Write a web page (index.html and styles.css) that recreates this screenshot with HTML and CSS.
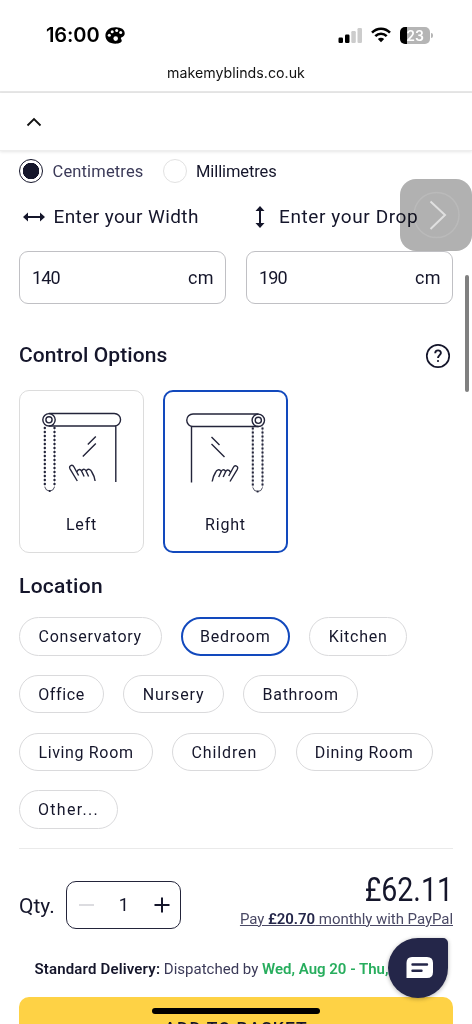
FILE: index.html
```html
<!DOCTYPE html>
<html lang="en">
<head>
<meta charset="utf-8">
<title>Make My Blinds</title>
<link rel="stylesheet" href="styles.css">
</head>
<body>
<div class="screen">
  <header class="browser">
    <div class="status">
      <div class="clock"><span>16:00</span>
        <svg width="20" height="17" viewBox="0 0 20 17"><path d="M11 .3C5 .1.4 3.5.4 8.500C.4 13.400 4.300 16.700 10.500 16.700C14.300 16.700 17.100 15.300 16.700 13.300C16.500 12.200 15.500 11.700 16 10.800C16.500 10 19.700 9.800 19.700 6.200C19.700 2.500 16 .400 11 .3Z"/><g fill="#fff"><circle cx="4.300" cy="8.200" r="1.500"/><circle cx="7.200" cy="4.700" r="1.500"/><circle cx="11.700" cy="3.600" r="1.500"/><circle cx="15.700" cy="5.500" r="1.500"/><circle cx="10.700" cy="11.600" r="2.300"/></g></svg>
      </div>
      <div class="indicators">
        <svg width="25" height="17" viewBox="0 0 25 17"><rect x=".5" y="10.500" width="4.500" height="5.500" rx="1.200"/><rect x="7" y="7.500" width="4.500" height="8.500" rx="1.200"/><g fill="#ccc"><rect x="13.300" y="4" width="4.500" height="12" rx="1.200"/><rect x="19.500" y="1" width="4.500" height="15" rx="1.200"/></g></svg>
        <svg class="wifi" width="20" height="16" viewBox="0 0 20 16"><g fill="none" stroke="#000" stroke-width="2.500"><path d="M1 5.700C6 .400 14 .400 19 5.700"/><path d="M4.300 9.200C7.500 5.900 12.500 5.900 15.700 9.200"/></g><path d="M10 15.200L6.800 12Q10 9.300 13.200 12Z"/></svg>
        <div class="battery"><span>23</span></div><i class="battery-tip"></i>
      </div>
    </div>
    <div class="address">makemyblinds.co.uk</div>
  </header>
  <nav class="bar"><svg width="16" height="10" viewBox="0 0 16 10"><path d="M1.500 8.500L8 2l6.500 6.500" fill="none" stroke="#111" stroke-width="1.800"/></svg></nav>

  <main class="content">
    <div class="units">
      <i class="radio radio-on"></i><span class="unit-cm">Centimetres</span>
      <i class="radio"></i><span class="unit-mm">Millimetres</span>
    </div>
    <div class="sizes">
      <section>
        <div class="size-label"><svg width="22" height="12" viewBox="0 0 22 12"><path d="M4 6h14" stroke="#15162b" stroke-width="2"/><path d="M0 6L5 1.500v9zM22 6L17 1.500v9z" fill="#15162b"/></svg><span>Enter your Width</span></div>
        <div class="field"><span class="value">140</span><span class="suffix">cm</span></div>
      </section>
      <section>
        <div class="size-label drop"><svg width="12" height="22" viewBox="0 0 12 22"><path d="M6 4v14" stroke="#15162b" stroke-width="2"/><path d="M6 0L1.500 5h9zM6 22L1.500 17h9z" fill="#15162b"/></svg><span>Enter your Drop</span></div>
        <div class="field"><span class="value">190</span><span class="suffix">cm</span></div>
      </section>
    </div>

    <div class="heading"><h2 class="h-control">Control Options</h2>
      <svg class="help" width="26" height="26" viewBox="0 0 26 26" fill="none" stroke="#15162b"><circle cx="13" cy="13" r="11.200" stroke-width="1.700"/><path d="M10.200 10.200C10.200 6.500 15.900 6.500 15.900 10C15.900 12 13 12.300 13 15" stroke-width="1.900"/><circle cx="13" cy="18" r=".5" stroke-width="1.200"/></svg>
    </div>
    <div class="cards">
      <div class="card">
        <svg width="82" height="84" viewBox="-.800 0 82 84" fill="none" stroke="#23243a" stroke-width="1.400">
          <g id="blind"><path d="M7 2.500H72.500A6 6 0 0 1 72.500 15H7M74 15V71"/><circle cx="7.200" cy="8.800" r="6.200"/><circle cx="7.200" cy="8.800" r="3.100"/><path d="M3 16V76M12.700 16V76" stroke-width="2.100" stroke-dasharray="2 2"/><path d="M3 76Q4 80 7.800 80Q11.700 80 12.700 76" stroke-width=".8"/><path d="M3 15V76M12.700 15V76" stroke-width=".3"/><path d="M7 80h1.800" stroke-width="1.900"/><path d="M46 33.500L54 25.500M41 45.500L54 32.500"/><path d="M35.500 70L28.200 57.800C26.500 54.500 30.600 53 32.200 56L36.800 64.500M35 61C36.500 57 39.500 58.500 40 60.500L42.300 65.500M40 60C41.500 57 44 58.500 44.500 60.500L46.800 65.500M44.500 60C46 57 49 58.500 50 61Q52.600 65 53.300 70" stroke-linejoin="round"/></g>
        </svg><span>Left</span>
      </div>
      <div class="card selected">
        <svg width="82" height="84" viewBox="0 0 82 84" fill="none" stroke="#23243a" stroke-width="1.400"><use href="#blind" transform="translate(80.500 .5) scale(-1 1)"/></svg><span>Right</span>
      </div>
    </div>

    <div class="heading"><h2 class="h-location">Location</h2></div>
    <div class="pills">
      <span class="pill conservatory">Conservatory</span><span class="pill bedroom selected">Bedroom</span><span class="pill kitchen">Kitchen</span>
      <span class="pill office">Office</span><span class="pill nursery">Nursery</span><span class="pill bathroom">Bathroom</span>
      <span class="pill living">Living Room</span><span class="pill children">Children</span><span class="pill dining">Dining Room</span>
      <span class="pill other">Other...</span>
    </div>

    <div class="purchase">
      <span class="qty">Qty.</span>
      <div class="stepper"><i class="minus"></i><span>1</span><svg width="16" height="16" viewBox="0 0 16 16"><path d="M8 .5v15M.5 8h15" stroke="#15162b" stroke-width="2"/></svg></div>
      <div class="pricing"><div class="price">£62.11</div><div class="paypal">Pay <b>£20.70</b> monthly with PayPal</div></div>
    </div>
    <div class="delivery"><b class="method">Standard Delivery:</b> Dispatched by <b class="date">Wed, Aug 20 - Thu,</b></div>
    <div class="basket"><span>ADD TO BASKET</span></div>
  </main>

  <div class="assist"><svg width="72" height="72" viewBox="0 0 72 72" fill="none"><circle cx="36.500" cy="36" r="22.500" stroke="#bababa" stroke-width="1.500"/><path d="M30.500 22.500L45 36L30.500 50" stroke="#e0e0e0" stroke-width="2"/></svg></div>
  <div class="scrollbar"></div>
  <div class="chat"><svg width="28" height="22" viewBox="0 0 28 22"><path d="M6 0H21Q27 0 27 6V15Q27 21 21 21H.500V6Q.500 0 6 0Z" fill="#fff"/><path d="M6.500 7.500H21M6.500 13.800H15.500" stroke="#242649" stroke-width="2.400" stroke-linecap="round"/></svg></div>
  <div class="home"></div>
</div>
</body>
</html>
```
FILE: styles.css
```css
* { box-sizing: border-box; }
body { margin: 0; background: #fff; color: #15162b; font-family: Roboto, "Open Sans", sans-serif; }
.screen { position: relative; width: 472px; height: 1024px; overflow: hidden; background: #fff; }
svg { display: block; flex: none; }
.browser { height: 93px; border-bottom: 2px solid #e7e7e7; font-family: Inter, sans-serif; color: #111; }
.status { height: 56px; padding: 14px 39px 0 46px; display: flex; justify-content: space-between; align-items: center; }
.clock { display: flex; align-items: center; gap: 5px; font-size: 20px; font-weight: 600; letter-spacing: -.1px; color: #000; }
.indicators { display: flex; align-items: center; }
.wifi { margin: 0 9px 0 8px; }
.battery { width: 30px; height: 17px; border-radius: 5px; background: linear-gradient(90deg, #000 7px, #b5b5b5 7px); color: #fff; font-size: 14px; font-weight: 600; line-height: 17px; text-align: center; }
.battery-tip { width: 2px; height: 5px; margin-left: 1px; border-radius: 0 2px 2px 0; background: #b5b5b5; }
.address { height: 35px; line-height: 34px; text-align: center; font-size: 14.200px; letter-spacing: .02px; }
.bar { height: 58px; padding: 24px 0 0 26px; border-bottom: 1px solid #eee; box-shadow: 0 1px 3px rgba(0,0,0,.1); }

.content { padding: 8px 19px 0; }
.units { height: 24px; display: flex; align-items: center; font-size: 16.500px; }
.radio { width: 24px; height: 24px; flex: none; border: 1.500px solid #e2e2e2; border-radius: 50%; }
.radio-on { border-color: #15162b; background: radial-gradient(circle, #15162b 8px, #fff 8.500px); }
.unit-cm { width: 110px; margin-left: 9.500px; color: #3b3a58; letter-spacing: .15px; }
.unit-mm { margin-left: 9.500px; letter-spacing: -.1px; }
.sizes { display: grid; grid-template-columns: 1fr 1fr; gap: 20px; margin-top: 18px; }
.size-label { height: 31px; padding-left: 3.500px; display: flex; align-items: center; gap: 9px; font-size: 19px; letter-spacing: .4px; white-space: nowrap; }
.size-label.drop { padding-left: 8px; gap: 13px; letter-spacing: .6px; }
.field { height: 53px; margin-top: 19px; padding: 0 11px 0 12px; border: 1px solid #c0c0c4; border-radius: 9px; display: flex; align-items: center; justify-content: space-between; }
.value { font-size: 18px; letter-spacing: -.9px; }
.suffix { font-size: 18px; letter-spacing: .4px; }
.heading { height: 28px; margin-top: 37px; display: flex; align-items: center; justify-content: space-between; padding-right: 2px; }
.help { margin-top: 2px; }
h2 { margin: 0; font-size: 21px; font-weight: 500; }
.h-control { letter-spacing: .1px; }
.h-location { letter-spacing: .3px; }
.cards { display: flex; gap: 19px; margin-top: 21px; }
.card { width: 125px; height: 163px; padding-top: 20px; border: 1px solid #dcdcdc; border-radius: 10px; display: flex; flex-direction: column; align-items: center; font-size: 16px; line-height: 20px; letter-spacing: .8px; }
.card svg { margin-bottom: 20px; }
.selected { border: 2px solid #1249bd; }
.card.selected { padding-top: 19px; border: 2px solid #1249bd; }
.cards + .heading { margin-top: 19px; }
.pills { display: flex; flex-wrap: wrap; gap: 19.300px; margin-top: 17px; }
.pill { height: 38.500px; border: 1px solid #dadadc; border-radius: 20px; line-height: 37px; font-size: 16px; text-align: center; letter-spacing: .9px; white-space: nowrap; }
.pill.selected { line-height: 35px; border: 2px solid #1249bd; }
.conservatory { width: 142.500px; letter-spacing: .75px; }
.bedroom { width: 109px; letter-spacing: .8px; }
.kitchen { width: 98px; letter-spacing: .75px; }
.office { width: 85px; letter-spacing: .6px; }
.nursery { width: 100.500px; }
.bathroom { width: 115px; letter-spacing: .75px; }
.living { width: 134px; letter-spacing: .65px; }
.children { width: 104px; }
.dining { width: 137px; letter-spacing: .7px; }
.other { width: 99px; letter-spacing: 1.300px; }
.purchase { margin-top: 19px; border-top: 1px solid #eaeaea; height: 100px; display: flex; align-items: flex-start; }
.qty { width: 47px; margin-top: 43px; font-size: 21px; line-height: 28px; white-space: nowrap; }
.stepper { width: 115px; height: 48px; margin-top: 32px; padding: 0 10px 0 11.500px; border: 1.500px solid #23243a; border-radius: 10px; display: flex; align-items: center; justify-content: space-between; font-size: 18px; }
.minus { width: 15px; height: 2px; background: #dcdce0; }
.pricing { flex: 1; text-align: right; white-space: nowrap; }
.price { margin-top: 20px; height: 40px; line-height: 40px; font-size: 34px; transform: scaleX(.84); transform-origin: right; }
.paypal { font-size: 15px; line-height: 20px; letter-spacing: -.05px; color: #4a4965; text-decoration: underline; }
.paypal b { font-weight: 600; color: #242649; }
.delivery { height: 24px; margin: 9px -20px 0 15.500px; overflow: hidden; white-space: nowrap; font-size: 15px; line-height: 24px; color: #3b3a58; }
.delivery b { font-weight: 600; color: #15162b; }
.delivery .method { letter-spacing: .16px; }
.delivery .date { color: #27ad5d; }
.basket { height: 58px; margin-top: 16px; border-radius: 10px; background: #fed245; text-align: center; padding-top: 21px; font-size: 17.500px; line-height: 22px; font-weight: 500; letter-spacing: 1px; }

.assist { position: absolute; left: 400px; top: 179px; width: 72px; height: 72px; border-radius: 16px; background: #b1b1b1; mix-blend-mode: multiply; }
.scrollbar { position: absolute; left: 465px; top: 275px; width: 3.500px; height: 117px; border-radius: 2px; background: #808080; }
.chat { position: absolute; left: 388px; top: 938px; width: 60px; height: 60px; border-radius: 50% 5px 50% 50%; background: #242649; box-shadow: 0 1px 4px rgba(0,0,0,.3); display: flex; align-items: center; justify-content: center; padding-left: 4px; }
.home { position: absolute; left: 152px; top: 1008px; width: 168px; height: 6px; border-radius: 3px; background: #000; }
```
